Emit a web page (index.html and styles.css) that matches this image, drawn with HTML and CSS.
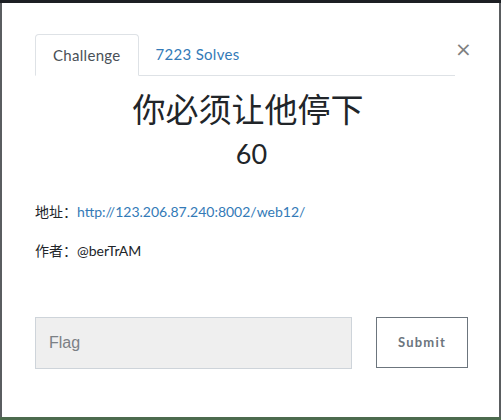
FILE: index.html
```html
<!DOCTYPE html>
<html>
<head>
<meta charset="utf-8">
<link rel="stylesheet" href="styles.css">
</head>
<body>
<div class="backdrop">
  <div class="modal">
    <div class="tabs-row">
      <ul class="tabs">
        <li class="tab active">Challenge</li>
        <li class="tab link">7223 Solves</li>
      </ul>
      <span class="close">&times;</span>
    </div>
    <h2 class="title">你必须让他停下</h2>
    <div class="points">60</div>
    <p class="line">地址：<a href="#" class="url">http://123.206.87.240:8002/web12/</a></p>
    <p class="line">作者：@berTrAM</p>
    <div class="submit-row">
      <div class="flag">Flag</div>
      <div class="btn">Submit</div>
    </div>
  </div>
</div>
</body>
</html>
```
FILE: styles.css
```css
html, body {
  margin: 0;
  padding: 0;
  width: 501px;
  height: 420px;
  overflow: hidden;
}
body {
  background: #1c1f23;
  font-family: Lato, "Noto Sans CJK SC", sans-serif;
}
.backdrop {
  height: 420px;
  box-sizing: border-box;
  padding: 3px 2px 0 2px;
  background: linear-gradient(to bottom, #1c1f23 0, #1c1f23 3px, #5a5d60 3px, #5a5d60 417px, #4c6b4e 417px);
}
.modal {
  background: #fff;
  height: 414px;
  box-sizing: border-box;
  padding: 31px 31px 0 33px;
  color: #212529;
}
.tabs-row {
  display: flex;
  align-items: flex-start;
  margin-right: 13px;
}
.tabs {
  list-style: none;
  margin: 0;
  padding: 0;
  display: flex;
  flex: 1;
  border-bottom: 1px solid #dee2e6;
  height: 41px;
}
.tab {
  font-size: 15px;
  letter-spacing: 0.3px;
  padding: 0 17px;
  line-height: 41px;
  height: 41px;
  box-sizing: border-box;
}
.tab.active {
  color: #495057;
  border: 1px solid #dee2e6;
  border-bottom-color: #fff;
  border-radius: 4px 4px 0 0;
  height: 42px;
  line-height: 40px;
}
.tab.link {
  color: #337ab7;
}
.close {
  width: 14px;
  text-align: center;
  font-size: 20px;
  line-height: 1;
  color: #808080;
  margin: 5px -14px 0 0;
  font-family: "DejaVu Sans", sans-serif;
}
.title {
  margin: 13px 7px 0 0;
  text-align: center;
  font-weight: 400;
  font-size: 33px;
  line-height: 40px;
  font-family: Lato, "Noto Sans CJK SC", sans-serif;
}
.points {
  text-align: center;
  font-size: 27px;
  line-height: 34px;
  margin-top: 8px;
}
.line {
  font-size: 14px;
  margin: 32px 0 0 0;
  line-height: 18px;
}
.line + .line {
  margin-top: 21px;
}
.url {
  color: #337ab7;
  text-decoration: none;
}
.submit-row {
  display: flex;
  align-items: flex-start;
  margin-top: 57px;
}
.flag {
  flex: none;
  width: 317px;
  height: 52px;
  box-sizing: border-box;
  background: #efefef;
  border: 1px solid #ced4da;
  color: #7b8085;
  font-family: "Liberation Sans", Arial, sans-serif;
  font-size: 16px;
  line-height: 50px;
  padding-left: 13px;
}
.btn {
  flex: none;
  margin-left: 24px;
  width: 92px;
  height: 51px;
  box-sizing: border-box;
  border: 1px solid #6c757d;
  color: #6c757d;
  font-weight: 700;
  font-size: 13px;
  letter-spacing: 1.2px;
  text-align: center;
  line-height: 49px;
}
```
